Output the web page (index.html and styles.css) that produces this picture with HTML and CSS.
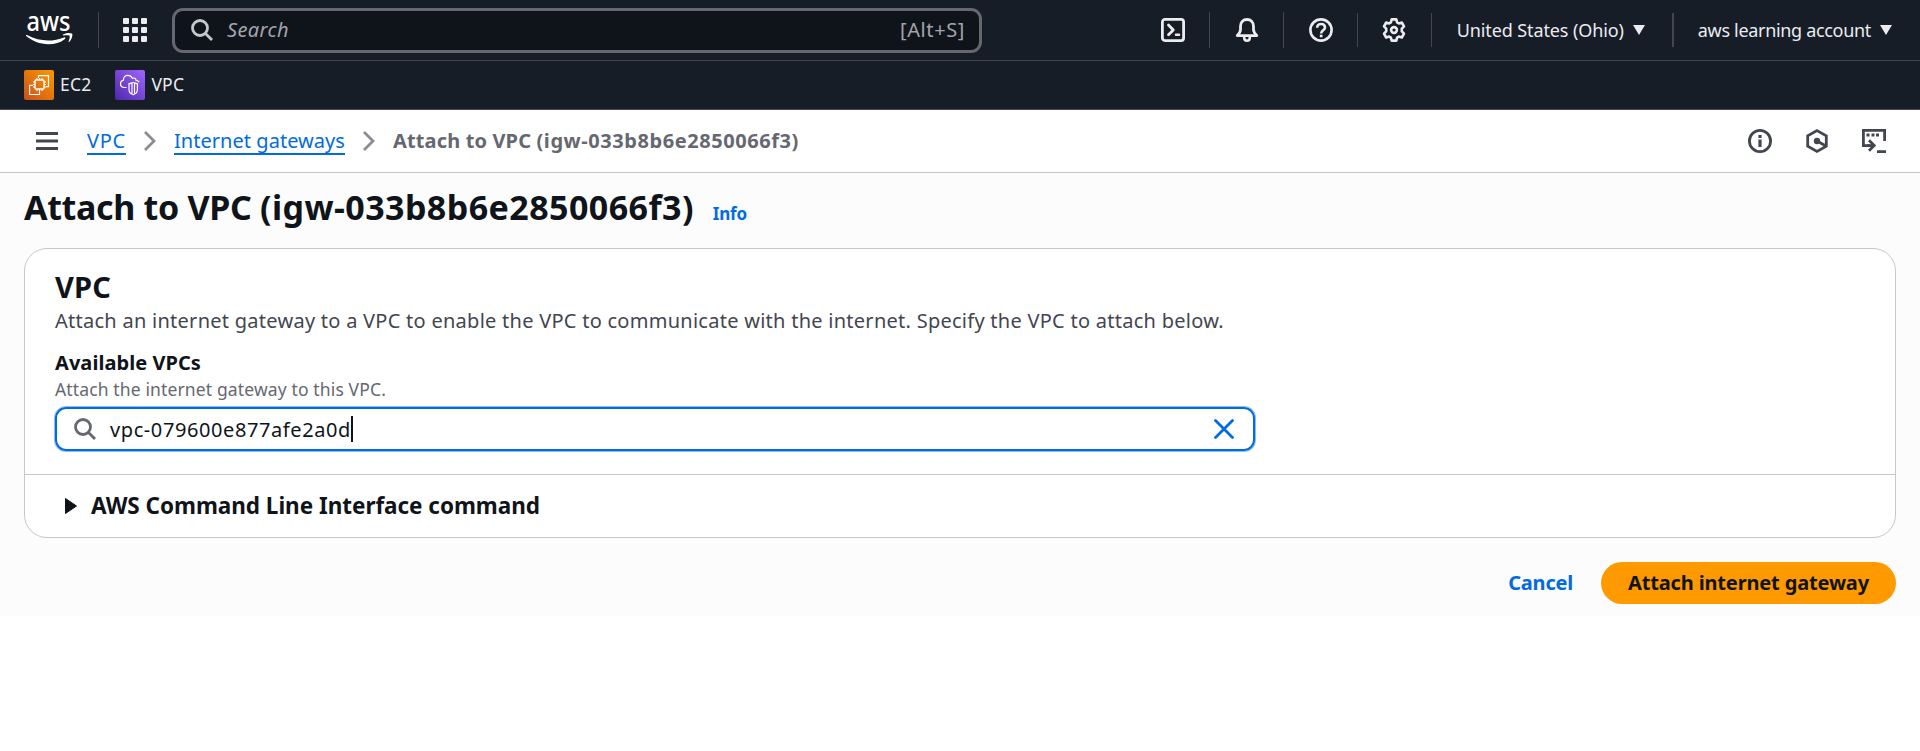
FILE: index.html
```html
<!DOCTYPE html>
<html lang="en">
<head>
<meta charset="utf-8">
<title>Attach to VPC | VPC Console</title>
<link rel="stylesheet" href="styles.css">
</head>
<body>
<header class="topbar">
  <svg class="logo" width="48" height="60" viewBox="0 -14 48 60" fill="#fff">
    <text class="logo-text" x="1.500" y="16.700" textLength="44" lengthAdjust="spacingAndGlyphs">aws</text>
    <g transform="translate(0 -.9)"><path d="M1 22.200c.3-.6.8-.4 1.500 0C9 25.600 16 27.400 23 27.400c5.500 0 11-1 16-3.100 1.200-.5 2 .6.900 1.500C35.500 29.500 29.500 31.200 23.500 31.200 15 31.200 7 27.900 1.200 23c-.2-.2-.4-.5-.2-.8z"/>
    <path d="M38 21.400c2.500-1.700 6.500-2 9-1.100 1 .5 0 6-2.600 8.300-.5.500-1 .2-.8-.4.700-1.800 1.500-4.700 1-5.400-.6-.7-3.800-.7-6-.5-.8.100-1.200-.4-.6-.9z"/></g>
  </svg>
  <i class="rule rule-logo"></i>
  <svg class="apps" width="24" height="24" viewBox="0 0 24 24" fill="#ebebf0">
    <rect width="6" height="6" rx="1"/><rect x="9" width="6" height="6" rx="1"/><rect x="18" width="6" height="6" rx="1"/>
    <rect y="9" width="6" height="6" rx="1"/><rect x="9" y="9" width="6" height="6" rx="1"/><rect x="18" y="9" width="6" height="6" rx="1"/>
    <rect y="18" width="6" height="6" rx="1"/><rect x="9" y="18" width="6" height="6" rx="1"/><rect x="18" y="18" width="6" height="6" rx="1"/>
  </svg>
  <div class="search">
    <svg width="22" height="22" viewBox="0 0 22 22" fill="none" stroke="#c6c6cd" stroke-width="2.800"><circle cx="9" cy="9" r="7.500"/><path d="M14.200 14.200l6.800 6.800"/></svg>
    <span class="search-hint">Search</span>
    <span class="shortcut">[Alt+S]</span>
  </div>
  <nav class="tools">
    <svg width="24" height="24" viewBox="0 0 24 24" fill="none" stroke="#ebebf0" stroke-width="2.800" stroke-linejoin="round" stroke-linecap="round"><rect x="1.400" y="1.400" width="21.200" height="21.200" rx="2.500"/><path d="M7.500 7l4.800 5-4.800 4.800"/><path d="M15 16.800h3" stroke-width="2.500"/></svg>
    <i class="rule"></i>
    <svg width="24" height="24" viewBox="0 0 24 24" fill="none" stroke="#ebebf0" stroke-width="2.800" stroke-linejoin="round"><path d="M2.200 17.600c2-1.800 3.300-3.300 3.300-6V8.400C5.500 4.500 8 1.500 12 1.500s6.500 3 6.500 6.900v3.200c0 2.700 1.300 4.200 3.300 6z"/><path d="M9.200 19v.800c0 1.800 1.200 2.900 2.800 2.900s2.800-1.100 2.800-2.900V19" stroke-width="2.600"/></svg>
    <i class="rule"></i>
    <svg width="24" height="24" viewBox="0 0 24 24" fill="none" stroke="#ebebf0" stroke-width="2.600"><circle cx="12" cy="12" r="10.600"/><path d="M8.200 9.700c0-2.300 1.600-3.700 3.900-3.700 2.200 0 3.900 1.300 3.900 3.400 0 2.800-3.900 2.800-3.900 6"/><path d="M10.800 18h2.700"/></svg>
    <i class="rule rule-short"></i>
    <svg width="24" height="24" viewBox="0 0 24 24" fill="none" stroke="#ebebf0" stroke-width="2.600" stroke-linejoin="round"><path d="M9.700 1.400h4.600l.8 3 1.700 1 3-.9 2.200 3.900-2.200 2.200v2.800l2.200 2.200-2.200 3.900-3-.9-1.700 1-.8 3H9.700l-.8-3-1.700-1-3 .9L2 15.600l2.200-2.200v-2.800L2 8.400l2.200-3.900 3 .9 1.700-1z"/><circle cx="12" cy="12" r="2.900"/></svg>
    <i class="rule rule-short"></i>
  </nav>
  <div class="menu region"><span>United States (Ohio)</span><svg width="12" height="10" viewBox="0 0 12 10" fill="#ebebf0"><path d="M0 0h12L6 10z"/></svg></div>
  <i class="rule rule-wide"></i>
  <div class="menu account"><span>aws learning account</span><svg width="12" height="10" viewBox="0 0 12 10" fill="#ebebf0"><path d="M0 0h12L6 10z"/></svg></div>
</header>
<nav class="favorites">
  <a class="favorite">
    <svg width="30" height="30" viewBox="0 0 30 30" fill="none" stroke="#fff" stroke-width="1.200">
      <defs><linearGradient id="ec2" x1="0" y1="1" x2="1" y2="0"><stop stop-color="#c8511b"/><stop offset="1" stop-color="#f90"/></linearGradient></defs>
      <rect width="30" height="30" rx="2" fill="url(#ec2)" stroke="none"/>
      <rect x="11" y="10" width="9" height="9" rx="1" stroke-width="1.400"/>
      <path d="M13 10V8M15.500 10V8M18 10V8M13 19v2M15.500 19v2M18 19v2M11 12H9M11 14.500H9M11 17H9M20 12h2M20 14.500h2M20 17h2"/>
      <path d="M14.500 8V5.600h10v11H22M9 15.300H5.600v9.200h9.900V21"/>
    </svg><span>EC2</span>
  </a>
  <a class="favorite">
    <svg width="30" height="30" viewBox="0 0 30 30" fill="none" stroke="#fff" stroke-width="1.200">
      <defs><linearGradient id="vpc" x1="0" y1="1" x2="1" y2="0"><stop stop-color="#4d27aa"/><stop offset="1" stop-color="#a166ff"/></linearGradient></defs>
      <rect width="30" height="30" rx="2" fill="url(#vpc)" stroke="none"/>
      <path d="M11.500 17.500H9.500c-2.500 0-4-1.600-4-3.700 0-2 1.200-3.300 3-3.700-.3-3 1.800-4.700 4.400-4.700 2.200 0 3.700 1 4.500 3 1.800-1 3.500 0 3.700 2 1.500.2 2.600.8 3.100 1.800"/>
      <path d="M18.200 12.500c1.600 0 2.600 1 4.200 1.200v6c0 2.500-1.900 4.200-4.200 4.900-2.300-.7-4.200-2.400-4.200-4.900v-6c1.600-.2 2.600-1.200 4.200-1.200zM17 13v11M19.500 13v11"/>
    </svg><span>VPC</span>
  </a>
</nav>
<div class="crumbbar">
  <svg class="burger" width="22" height="18" viewBox="0 0 22 18" fill="#424650"><path d="M0 0h22v3H0zM0 7.500h22v3H0zM0 15h22v3H0z"/></svg>
  <ol class="crumbs">
    <li><a class="crumb-link crumb-vpc">VPC</a></li>
    <li class="sep"><svg width="12" height="20" viewBox="0 0 12 20" fill="none" stroke="#8c8c94" stroke-width="2.800"><path d="M1 1l9 9-9 9"/></svg></li>
    <li><a class="crumb-link">Internet gateways</a></li>
    <li class="sep"><svg width="12" height="20" viewBox="0 0 12 20" fill="none" stroke="#8c8c94" stroke-width="2.800"><path d="M1 1l9 9-9 9"/></svg></li>
    <li class="crumb-current">Attach to VPC <span class="crumb-id">(igw-033b8b6e2850066f3)</span></li>
  </ol>
  <div class="panel-icons">
    <svg width="24" height="24" viewBox="0 0 24 24" fill="none" stroke="#424650" stroke-width="2.800"><circle cx="12" cy="12" r="10.600"/><path d="M12 6v3M12 10.500V18" stroke-width="3.200"/></svg>
    <svg width="24" height="24" viewBox="0 0 24 24" fill="none" stroke="#424650" stroke-width="2.800"><path d="M12 1.600l9.300 5.200v10.400L12 22.400l-9.300-5.200V6.800z"/><circle cx="12" cy="12" r="3.200" fill="#424650" stroke="none"/><path d="M12 12l9 5"/></svg>
    <svg width="24" height="24" viewBox="0 0 24 24" fill="none" stroke="#424650" stroke-width="2.800"><path d="M8 16.600H1.400V1.400h21.200V12"/><path d="M7 11.300l5.200 5.200L7 21.700M5 16.600h7M15 22.600h9"/><path d="M4.500 6h3M9.500 6h3M14 6h3" stroke-width="3"/></svg>
  </div>
</div>
<main class="page">
  <div class="title-row"><h1>Attach to VPC <span class="title-id">(igw-033b8b6e2850066f3)</span></h1><a class="info">Info</a></div>
  <section class="card">
    <div class="card-body">
      <h2>VPC</h2>
      <p class="desc">Attach an internet gateway to a VPC to enable the VPC to communicate with the internet. Specify the VPC to attach below.</p>
      <div class="label">Available VPCs</div>
      <div class="hint">Attach the internet gateway to this VPC.</div>
      <div class="input">
        <svg width="22" height="22" viewBox="0 0 22 22" fill="none" stroke="#656871" stroke-width="2.800"><circle cx="9" cy="9" r="7.500"/><path d="M14.200 14.200l6.800 6.800"/></svg>
        <span class="value">vpc-079600e877afe2a0d</span><i class="caret"></i>
        <svg class="clear" width="20" height="20" viewBox="0 0 20 20" fill="none" stroke="#006ce0" stroke-width="2.800" stroke-linecap="round"><path d="M1.500 1.500l17 17M18.500 1.500l-17 17"/></svg>
      </div>
    </div>
    <div class="card-footer"><svg width="12" height="16" viewBox="0 0 12 16" fill="#0f141a" stroke="#0f141a" stroke-linejoin="round"><path d="M.5.500v15L11.500 8z"/></svg><h3>AWS Command Line Interface command</h3></div>
  </section>
  <div class="actions"><a class="cancel">Cancel</a><button class="primary">Attach internet gateway</button></div>
</main>
</body>
</html>
```
FILE: styles.css
```css
* { box-sizing: border-box; }
body { margin: 0; height: 751px; background: #fff; color: #0f141a; font-family: "Noto Sans", sans-serif; font-size: 20px; white-space: nowrap; }
svg { display: block; flex: none; }
h1, h2, h3, p, ol { margin: 0; padding: 0; }

/* Global navigation */
.topbar { display: flex; align-items: center; height: 61px; padding: 0 27px 0 25px; background: #161d26; border-bottom: 1px solid #424650; }
.logo { overflow: visible; }
.logo-text { font-size: 27px; font-weight: 500; }
.rule { flex: none; width: 1px; height: 36px; background: #424650; }
.rule-short { height: 34px; }
.rule-logo { margin: 0 24px 0 25px; }
.search { display: flex; flex: none; align-items: center; width: 810px; height: 45px; margin-left: 25px; padding: 0 14px 0 16px; background: #0f141a; border: 3px solid #656871; border-radius: 11px; line-height: 28px; }
.search-hint { margin-left: 14px; color: #a4a4ad; font-style: italic; letter-spacing: .39px; }
.shortcut { margin-left: auto; color: #a4a4ad; letter-spacing: .6px; }
.tools { display: flex; align-items: center; gap: 24.4px; margin-left: 179px; }
.menu { display: flex; align-items: center; gap: 9px; color: #ebebf0; font-size: 18px; }
.region { margin-left: 25px; letter-spacing: -.11px; }
.rule-wide { width: 2px; height: 34px; margin-left: 27px; }
.account { margin-left: 24px; letter-spacing: -.32px; }

/* Favorites bar */
.favorites { display: flex; gap: 24px; align-items: center; height: 49px; padding-left: 24px; background: #161d26; border-bottom: 1px solid #424650; }
.favorite { display: flex; align-items: center; gap: 6px; color: #ebebf0; font-size: 17.5px; line-height: 24px; }
.favorite span { padding-bottom: 2px; letter-spacing: .2px; }

/* Breadcrumbs */
.crumbbar { display: flex; align-items: center; height: 63px; padding: 0 34px 0 36px; border-bottom: 1px solid #c6c6cd; background: #fff; }
.crumbs { display: flex; align-items: center; margin-left: 29px; list-style: none; line-height: 28px; }
.sep { margin: 0 18px; }
.crumb-link { display: block; color: #006ce0; border-bottom: 2px solid #006ce0; line-height: 25px; letter-spacing: .04px; }
.crumb-vpc { letter-spacing: .75px; }
.crumb-current { color: #656871; font-weight: 700; letter-spacing: .14px; }
.crumb-id { letter-spacing: .57px; }
.panel-icons { display: flex; gap: 33px; margin-left: auto; }

/* Page content */
.page { height: 443px; padding: 0 24px; background: #fcfcfd; }
.title-row { display: flex; align-items: baseline; gap: 19px; height: 75px; padding-top: 11px; }
h1 { font-size: 34px; line-height: 46px; letter-spacing: -.33px; }
.title-id { letter-spacing: .43px; }
.info { color: #006ce0; font-size: 17px; font-weight: 700; letter-spacing: -.2px; }
.card { height: 290px; background: #fff; border: 1px solid #c6c6cd; border-radius: 23px; }
.card-body { height: 225px; padding: 20px 29px 0 30px; }
h2 { font-size: 29px; line-height: 36px; letter-spacing: .15px; }
.desc { margin-top: 2px; color: #424650; line-height: 28px; letter-spacing: .265px; }
.label { margin-top: 14px; font-weight: 700; line-height: 28px; letter-spacing: .05px; }
.hint { color: #656871; font-size: 17.5px; line-height: 25px; letter-spacing: .135px; }
.input { display: flex; align-items: center; width: 1200px; height: 44px; margin-top: 5px; padding: 0 19px 0 17px; border: 2px solid #006ce0; border-radius: 11px; box-shadow: 0 0 0 1px rgba(0, 108, 224, .45); }
.value { margin-left: 14px; letter-spacing: .59px; }
.caret { width: 2px; height: 26px; background: #0f141a; }
.clear { margin-left: auto; }
.card-footer { display: flex; align-items: center; gap: 14px; height: 63px; padding-left: 40px; border-top: 1px solid #c6c6cd; }
h3 { font-size: 22.5px; line-height: 30px; letter-spacing: -.03px; }
.actions { display: flex; align-items: center; justify-content: flex-end; gap: 28px; margin-top: 24px; }
.cancel { color: #006ce0; font-weight: 700; line-height: 28px; padding-bottom: 1px; letter-spacing: -.2px; }
.primary { width: 295px; height: 42px; padding: 0; border: 0; border-radius: 21px; background: #f90; color: #0f141a; font: 700 20px/28px "Noto Sans", sans-serif; letter-spacing: -.15px; }
```
